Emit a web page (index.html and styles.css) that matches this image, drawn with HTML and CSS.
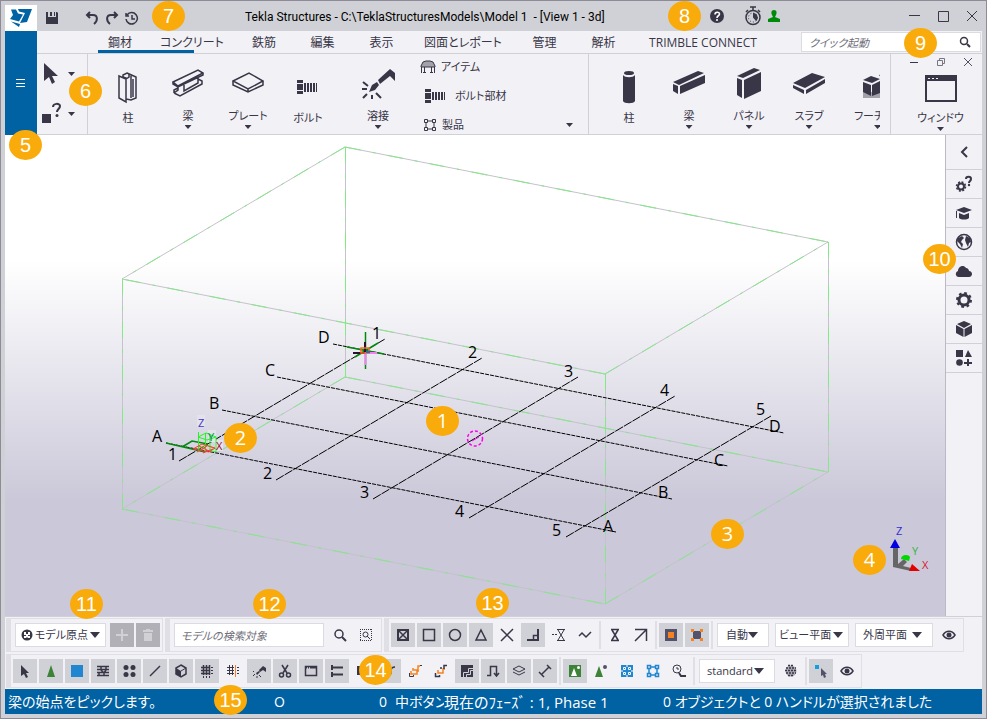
FILE: index.html
```html
<!DOCTYPE html>
<html lang="ja">
<head>
<meta charset="utf-8">
<title>Tekla Structures</title>
<link rel="stylesheet" href="styles.css">
</head>
<body>
<div class="app">
  <header class="titlebar">
    <div class="logo"><svg width="32" height="26" viewBox="0 0 32 26"><path fill="#0063a3" d="M6 4.500h5l2 4 5 1-4 7-9-2.500 3-4zM13 4h14l-5 13-7 1 5-10-6-1.500zM6 16.500l9 2.500-1 3z"/></svg></div>
    <div class="quick">
      <button class="plain" aria-label="保存"><svg width="14" height="14" viewBox="0 0 14 14"><path fill="#383647" d="M1 1h2v5h8V1h1l1 1v11H1zM5 1h2v4H5zM9 1h1v4H9z"/></svg></button>
      <button class="plain undo" aria-label="元に戻す"><svg width="14" height="14" viewBox="0 0 14 14"><path class="s2" d="M5 1L2 4l3 3M2 4h6c5 0 5 6 1 9"/></svg></button>
      <button class="plain" aria-label="やり直し"><svg width="14" height="14" viewBox="0 0 14 14"><path class="s2" d="M9 1l3 3-3 3M12 4H6C1 4 1 10 5 13"/></svg></button>
      <button class="plain" aria-label="履歴"><svg width="14" height="14" viewBox="0 0 14 14"><path class="s1 m" d="M2 4a5.700 5.700 0 1 1-1 4M1 2v3h3M7 4v4h3"/></svg></button>
    </div>
    <h1 class="title">Tekla Structures - C:\TeklaStructuresModels\Model 1&nbsp; - [View 1 - 3d]</h1>
    <div class="status-icons">
      <button class="plain" aria-label="ヘルプ"><svg width="14" height="14" viewBox="0 0 14 14"><circle cx="7" cy="7" r="7" fill="#383647"/><path d="M5 5.500c0-3 4.500-3 4.500-.5C9.500 7 7 6.500 7 9" fill="none" stroke="#fff" stroke-width="1.600"/><circle cx="7" cy="11" r="1" fill="#fff"/></svg></button>
      <button class="plain timer" aria-label="タイマー"><svg width="18" height="20" viewBox="0 0 18 20"><circle class="s1 m" cx="9" cy="11.500" r="7"/><path class="s1 m" d="M6 1h6M9 1v3M14 4l2 2M4 4L2 6"/><path d="M9 7a4.500 4.500 0 0 1 3 8l-3-3.500z" fill="#383647"/><circle cx="9" cy="11.500" r="4.500" fill="none" stroke="#383647" stroke-dasharray="1 2"/></svg></button>
      <button class="plain" aria-label="ユーザー"><svg width="12" height="12" viewBox="0 0 12 12"><path fill="#008a0c" d="M6 0c3 0 3 3 2 5l-1 2 5 2v3H0V9l5-2-1-2C3 3 3 0 6 0z"/></svg></button>
    </div>
    <div class="wincontrols">
      <button class="plain" aria-label="最小化"><svg width="12" height="12" viewBox="0 0 12 12"><path class="s1" d="M1 5.500h11"/></svg></button>
      <button class="plain" aria-label="最大化"><svg width="12" height="12" viewBox="0 0 12 12"><path class="s1" d="M1.500 1.500h10v10h-10z"/></svg></button>
      <button class="plain" aria-label="閉じる"><svg width="12" height="12" viewBox="0 0 12 12"><path class="s1" d="M1 1l10 10M11 1L1 11"/></svg></button>
    </div>
  </header>

  <div class="head">
    <button class="menu" aria-label="メニュー"><svg width="10" height="10" viewBox="0 0 10 10"><path stroke="#fff" d="M0 1.500h9M0 5.500h9M0 8.500h9"/></svg></button>
    <div class="headmain">
      <div class="tabrow">
        <nav class="tabs">
          <a href="#steel" class="active">鋼材</a><a href="#concrete">コンクリート</a><a href="#rebar">鉄筋</a><a href="#edit">編集</a><a href="#view">表示</a><a href="#drawings">図面とレポート</a><a href="#manage">管理</a><a href="#analysis">解析</a><a href="#connect">TRIMBLE CONNECT</a>
        </nav>
        <div class="launch"><input type="text" aria-label="クイック起動" placeholder="クイック起動"><svg width="12" height="12" viewBox="0 0 12 12"><circle class="s1 m" cx="5" cy="5" r="3.500"/><path class="s2" d="M8 8l3 3"/></svg></div>
      </div>
      <div class="ribbon">
        <div class="pointers">
          <button class="plain" aria-label="選択"><svg width="22" height="24" viewBox="0 0 22 24"><path fill="#383647" d="M3 1l14 13-6 0 3 6-3 2-3-7-5 4z"/></svg><i class="caret"></i></button>
          <button class="plain" aria-label="情報"><svg width="22" height="24" viewBox="0 0 22 24"><path fill="#383647" d="M1 12h9v9H1z"/><path class="s2" d="M12 5c0-4 7-4 7-1 0 3-3 3-3 6"/><circle cx="16" cy="13.500" r="1.500" fill="#383647"/></svg><i class="caret"></i></button>
        </div>
        <div class="group steel">
          <button class="tool low"><svg width="32" height="34" viewBox="0 0 32 34"><path class="s1 m" d="M7 6l7 3v23l-7-4zM15 3l9 4v21l-5 2-5-1V8l-3-1 0-2zM19 5v23M14 9l3-2V4M21 9v18"/></svg><span>柱</span></button>
          <button class="tool"><svg width="32" height="34" viewBox="0 0 32 34"><path class="s1 m" d="M1 14L26 2l5 3L6 18zM1 14v2l5 3L31 7V5M6 19v3l-4 3M2 25l6 3 22-12v-3l-4-2M12 17v6L26 15V10M2 25v-3l4-2"/></svg><span>梁</span><i class="caret"></i></button>
          <button class="tool"><svg width="32" height="34" viewBox="0 0 32 34"><path class="s1 m" d="M1 13L17 5l14 8-15 8zM1 13v4l15 7 15-7v-4M16 21v3"/></svg><span>プレート</span><i class="caret"></i></button>
          <button class="tool low"><svg width="32" height="34" viewBox="0 0 32 34"><path fill="#383647" d="M5 10h6v3H5zM5 14h6v6H5zM5 21h6v3H5zM12 13h2v9h-2zM15 13h2v9h-2zM18 13h2v9h-2zM21 13h2v9h-2zM24 13h1v9h-1z"/></svg><span>ボルト</span></button>
          <button class="tool weld"><svg width="36" height="34" viewBox="0 0 36 34"><path fill="#383647" d="M18 12L30 1l5 4v8l-5-5-10 8zM9 24l3-7 5-3 2 3-4 5z"/><path class="s2" d="M3 14l5 4M2 21h5M3 30l4-4M12 27v4M16 25l5 5"/></svg><span>溶接</span><i class="caret"></i></button>
          <div class="steellist">
            <button class="plain"><svg width="16" height="14" viewBox="0 0 16 14"><path fill="#a3a2aa" stroke="#383647" d="M1 6l2-4 3-1h4l3 1 2 4v1H1z"/><path class="s1" d="M1.500 7v6M14.500 7v6M4.500 7v5M11.500 7v5M3 12.500h3M10 12.500h3"/></svg><span>アイテム</span></button>
            <button class="plain bolt"><svg width="22" height="14" viewBox="0 0 22 14"><path fill="#383647" d="M0 0h6v3H0zM0 4h6v6H0zM0 11h6v3H0zM7 3h2v8H7zM10 3h2v8h-2zM13 3h2v8h-2zM16 3h2v8h-2zM19 3h1v8h-1z"/></svg><span>ボルト部材</span></button>
            <button class="plain assembly"><svg width="12" height="12" viewBox="0 0 12 12"><path class="s1" d="M.5.5h3v3h-3zM8.500.5h3v3h-3zM.5 8.500h3v3h-3zM8.500 8.500h3v3h-3zM4 2h4M4 10h4M2 4v4M10 4v4"/></svg><span>製品</span><i class="caret"></i></button>
          </div>
        </div>
        <div class="group concrete"><div class="clip">
          <button class="tool low"><svg width="32" height="34" viewBox="0 0 32 34"><path fill="#383647" d="M10 5c2 3 10 3 12 0v26c-1 3-11 3-12 0z"/><ellipse cx="16" cy="3" rx="5" ry="2" fill="#383647"/></svg><span>柱</span></button>
          <button class="tool"><svg width="32" height="34" viewBox="0 0 32 34"><path fill="#383647" d="M0 14L25 3l6 2L6 17zM0 16l5 2v8l-5-3zM7 18L32 7v8L7 26z"/></svg><span>梁</span><i class="caret"></i></button>
          <button class="tool"><svg width="32" height="34" viewBox="0 0 32 34"><path fill="#383647" d="M4 8L21 0l6 2-17 8zM4 10l5 2v18l-5-3zM11 12L28 4v19l-17 8z"/></svg><span>パネル</span><i class="caret"></i></button>
          <button class="tool"><svg width="32" height="34" viewBox="0 0 32 34"><path fill="#383647" d="M0 15L19 5l13 4-20 11zM0 17l11 5v4L0 20zM13 22l19-11v4L13 26z"/></svg><span>スラブ</span><i class="caret"></i></button>
          <button class="tool"><svg width="32" height="34" viewBox="0 0 32 34"><path fill="#a3a2aa" d="M10 24h20v6H10z"/><path fill="#383647" d="M10 12l8-4 9 3-8 4zM10 14l8 3v11l-8-4zM19 17l8-4v12l-8 3zM26 7l3-1v5z"/></svg><span>フーチ</span><i class="caret foot"></i></button>
        </div></div>
        <div class="group windowgroup">
          <div class="mdi">
            <button class="plain" aria-label="ビューを最小化"><svg width="10" height="8" viewBox="0 0 10 8"><path class="s1" d="M1 4.500h8"/></svg></button>
            <button class="plain" aria-label="ビューを元に戻す"><svg width="10" height="8" viewBox="0 0 10 8"><path fill="none" stroke="#777681" d="M1.500 2.500h5v5h-5zM3.500 2V.5h5v5H7"/></svg></button>
            <button class="plain" aria-label="ビューを閉じる"><svg width="10" height="8" viewBox="0 0 10 8"><path fill="none" stroke="#555361" d="M1 0l8 8M9 0L1 8"/></svg></button>
          </div>
          <button class="tool windowtool"><svg width="32" height="27" viewBox="0 0 32 27"><path fill="#383647" fill-rule="evenodd" d="M0 0h32v27H0zM2 6v19h28V6zM3 3v1h2V3zM7 3v1h2V3zM11 3v1h2V3z"/></svg><span>ウィンドウ</span><i class="caret"></i></button>
        </div>
      </div>
    </div>
  </div>

  <main class="work">
    <div class="view">
      <svg class="scene" viewBox="5 135 940 481" role="img" aria-label="View 1 - 3d">
        <path class="box" d="M345 147L828 242L605 374L122 279ZM345 377L828 472L605 604L122 509ZM345.500 147V377M828.500 242V472M605.500 374V604M122.500 279V509"/>
        <path class="boxdash" d="M345 147L828 242M605 374L828 242M605 374L122 279M345 147L122 279M345 377L828 472M605 604L828 472M122 509L605 604M345 377L122 509M345.500 147V377M828.500 242V472M605.500 374V604M122.500 279V509"/>
        <path class="gridx" d="M166 443L616 532M222 410L672 499M277 377L728 466M333 344L784 433"/>
        <path class="gridy" d="M179 461L385 339M276 480L482 358M373 499L578 377M469 518L675 396M566 537L771 416"/>
        <g class="gl">
          <text x="152" y="442">A</text><text x="209" y="409">B</text><text x="265" y="376">C</text><text x="318" y="343">D</text>
          <text x="168" y="460">1</text><text x="263" y="479">2</text><text x="360" y="498">3</text><text x="455" y="517">4</text><text x="552" y="536">5</text>
          <text x="372" y="339">1</text><text x="468" y="358">2</text><text x="564" y="377">3</text><text x="660" y="396">4</text><text x="756" y="415">5</text>
          <text x="603" y="532">A</text><text x="658" y="498">B</text><text x="714" y="466">C</text><text x="769" y="432">D</text>
        </g>
        <g fill="none">
          <circle cx="475" cy="438.500" r="7.500" stroke="#ff00f0" stroke-width="1.500" stroke-dasharray="3 2"/>
          <path stroke="#ff00f0" d="M472 441l7-4"/>
          <path stroke="#008a0c" stroke-width="1.500" d="M365.500 332v37M347 347l37 7M355 357l23-14"/>
          <path stroke="#2b1030" stroke-width="2" d="M353 353h12M365 342v10"/>
          <path stroke="#f080f0" stroke-width="2" d="M365 353h12M365.500 353v12"/>
          <path stroke="#f26a21" stroke-width="1.500" d="M361 348h8v5h-8z"/>
          <path stroke="#1b6dd1" stroke-width="2" d="M366 352h4"/>
        </g>
        <path fill="#e5e3ea" d="M197 415h8v12h-8zM208 430h8v12h-8zM215 440h8v11h-8z"/>
        <g fill="none">
          <path stroke="#008a0c" stroke-width="1.500" d="M166 443l39 9M182 447l10-6 16 3"/>
          <path stroke="#23f523" d="M198.500 432v19M198 437l8-4 10 4v15l-6-1V434M198 437l9 3 9-3M198 449l8-4 10 4M205.500 433v19"/>
          <path stroke="#ff3b30" d="M193 449l9-5 13 4-6 4zM199 446l12 6M197 452l10-6M203 453l10-4"/>
        </g>
        <g class="axis"><text x="198" y="427" fill="#4338c9">Z</text><text x="208" y="441" fill="#008a4a">Y</text><text x="216" y="450" fill="#a80038">X</text>
        <text x="896" y="535" fill="#322fd0">Z</text><text x="912" y="555" fill="#32b53b">Y</text><text x="922" y="569" fill="#d6202a">X</text></g>
        <path fill="#666" d="M893 548h5v16l6-5 3 3-4 4 8 2v3l-18-4z"/><path fill="#0000e0" d="M890 548l5-9 5 9z"/><path fill="#00d900" d="M901 559c0-5 8-5 9-2l-1 4-4-1z"/><path fill="#e40000" d="M909 571l3-7 8 7z"/>
      </svg>
    </div>
    <aside class="side">
      <button class="collapse" aria-label="サイドパネル"><svg width="16" height="16" viewBox="0 0 16 16"><path class="s2" d="M11 3L6 8l5 5"/></svg></button>
      <button aria-label="設定ヘルプ"><svg width="18" height="18" viewBox="0 0 18 18"><circle cx="6" cy="11.500" r="3" fill="none" stroke="#383647" stroke-width="2"/><circle cx="6" cy="11.500" r="4.500" fill="none" stroke="#383647" stroke-width="1.500" stroke-dasharray="2 1.530"/><path class="s2" d="M11 4c0-3 5-3 5 0 0 2-2 2-2 4"/><circle cx="14" cy="10" r="1.200" fill="#383647"/></svg></button>
      <button aria-label="学習"><svg width="18" height="16" viewBox="0 0 18 16"><path fill="#383647" d="M1 5l8-3 8 3-8 3zM4 8l5 2 5-2v5c-2 2-8 2-10 0zM1 6h1v7H1z"/></svg></button>
      <button aria-label="オンライン"><svg width="18" height="18" viewBox="0 0 18 18"><circle class="s1 m" cx="9" cy="9" r="7.500"/><path fill="#383647" d="M3 5l4-2 2 2-2 2-1 2 2 2-1 4-2-4-3-3zM11 3l4 2 1 4-2 1-1 4-2-4-1-3z"/></svg></button>
      <button aria-label="クラウド"><svg width="18" height="16" viewBox="0 0 18 16"><path fill="#383647" d="M4 14c-4 0-4-5-1-6 0-4 5-7 8-3 2 0 3 2 3 3 4 0 4 6 0 6z"/></svg></button>
      <button aria-label="設定"><svg width="18" height="18" viewBox="0 0 18 18"><circle cx="9" cy="9" r="5" fill="none" stroke="#383647" stroke-width="3"/><circle cx="9" cy="9" r="7" fill="none" stroke="#383647" stroke-width="2" stroke-dasharray="2.750 2.750"/></svg></button>
      <button aria-label="モデル"><svg width="18" height="18" viewBox="0 0 18 18"><path fill="#383647" d="M9 1l7 3-7 4-7-4zM1 5l7.500 4v8L1 13zM17 5L9.500 9v8l7.500-4z"/></svg></button>
      <button aria-label="コンポーネント"><svg width="18" height="18" viewBox="0 0 18 18"><path fill="#383647" d="M1 1h7v7H1zM13 1l4 7h-7zM12 10h2v3h3v2h-3v2h-2v-2h-3v-2h3z"/><circle cx="4.500" cy="13.500" r="3.300" fill="#383647"/></svg></button>
    </aside>
  </main>

  <footer class="bottom">
    <div class="bars">
      <div class="bar">
        <div class="drop origin"><svg width="12" height="12" viewBox="0 0 12 12"><circle cx="6" cy="6" r="5.500" fill="#383647"/><path fill="#fff" d="M3 3h2v2h2V3h2v3H7v1h2v2H7L6 8 5 9H3V7h2V6H3z"/></svg><select aria-label="原点"><option>モデル原点</option></select></div>
        <button class="dis" aria-label="追加"><svg width="14" height="14" viewBox="0 0 14 14"><path stroke="#d0d0d5" stroke-width="2" d="M7 1v12M1 7h12"/></svg></button>
        <button class="dis" aria-label="削除"><svg width="14" height="14" viewBox="0 0 14 14"><path fill="#d0d0d5" d="M5 1h4v1h3v2H2V2h3zM3 5h8v8H3z"/></svg></button>
      </div>
      <div class="bar findbar">
        <input class="find" type="text" aria-label="モデルの検索対象" placeholder="モデルの検索対象">
        <button class="t" aria-label="検索"><svg width="14" height="14" viewBox="0 0 14 14"><circle class="s1 m" cx="6" cy="6" r="4"/><path class="s2" d="M9 9l4 4"/></svg></button>
        <button class="t" aria-label="選択内検索"><svg width="14" height="14" viewBox="0 0 14 14"><path class="s1" d="M1.500 1v12M12.500 1v12M1 1.500h12M1 12.500h12" stroke-dasharray="1 1"/><circle class="s1" cx="6.500" cy="6.500" r="2.500"/><path class="s1" d="M8 8l3 3"/></svg></button>
      </div>
      <div class="bar snap">
        <button class="t on" aria-label="スナップ 交点"><svg width="14" height="14" viewBox="0 0 14 14"><path class="s2" d="M2 2h10v10H2z"/><path class="s1 m" d="M3 3l8 8M11 3l-8 8"/></svg></button>
        <button class="t on" aria-label="スナップ 端点"><svg width="14" height="14" viewBox="0 0 14 14"><path class="s1 m" d="M1.500 1.500h11v11h-11z"/></svg></button>
        <button class="t on" aria-label="スナップ 中心"><svg width="14" height="14" viewBox="0 0 14 14"><circle class="s1 m" cx="7" cy="7" r="5.500"/></svg></button>
        <button class="t on" aria-label="スナップ 中点"><svg width="14" height="14" viewBox="0 0 14 14"><path class="s1 m" d="M7 2l5 10H2z"/></svg></button>
        <button class="t" aria-label="スナップ 交差"><svg width="14" height="14" viewBox="0 0 14 14"><path class="s1 m" d="M1 1l12 12M13 1L1 13"/></svg></button>
        <button class="t on" aria-label="スナップ 垂直"><svg width="14" height="14" viewBox="0 0 14 14"><path class="s2" d="M1 12h12M12 1v11"/><path class="s1 m" d="M7.500 12V7.500H12"/></svg></button>
        <button class="t" aria-label="スナップ 延長"><svg width="14" height="14" viewBox="0 0 14 14"><path class="s1" d="M5 1.500h8M5 12.500h8M6 2l6 10M12 2l-6 10"/><path class="s1" d="M0 6.500h6" stroke-dasharray="2 1"/></svg></button>
        <button class="t" aria-label="スナップ 任意"><svg width="14" height="14" viewBox="0 0 14 14"><path class="s1 m" d="M1 8l3-3 4 4 5-5"/></svg></button>
        <i class="sep"></i>
        <button class="t" aria-label="スナップ 近接"><svg width="14" height="14" viewBox="0 0 14 14"><path class="s1 m" d="M3 1.500h8M3 12.500h8M4 2l6 10M10 2L4 12"/></svg></button>
        <button class="t" aria-label="スナップ 線"><svg width="14" height="14" viewBox="0 0 14 14"><path class="s1 m" d="M1 1.500h11.500V13M12 2L1 13"/></svg></button>
        <i class="sep"></i>
        <button class="t on" aria-label="参照点"><svg width="14" height="14" viewBox="0 0 14 14"><path fill="#54526a" d="M1 1h12v12H1z"/><path fill="#f58220" d="M4 4h6v6H4z"/></svg></button>
        <button class="t on" aria-label="ジオメトリ点"><svg width="14" height="14" viewBox="0 0 14 14"><path fill="#54526a" d="M3 3h8v8H3z"/><path fill="#f58220" d="M1 1h3v3H1zM10 1h3v3h-3zM1 10h3v3H1zM10 10h3v3h-3z"/></svg></button>
        <i class="sep"></i>
        <div class="drop auto"><select aria-label="自動"><option>自動</option></select></div>
        <div class="drop vplane"><select aria-label="平面"><option>ビュー平面</option></select></div>
        <div class="drop oplane"><select aria-label="外周"><option>外周平面</option></select></div>
        <button class="t" aria-label="表示"><svg width="14" height="14" viewBox="0 0 14 14"><path class="s1 m" d="M1 7c3-5 9-5 12 0-3 5-9 5-12 0z"/><circle cx="7" cy="7" r="2.500" fill="#383647"/></svg></button>
      </div>
    </div>
    <div class="bars">
      <div class="bar selbar">
        <button class="t on" aria-label="すべて選択"><svg width="14" height="14" viewBox="0 0 14 14"><path fill="#383647" d="M3 1l8 8H8l2 4-2 1-2-4-3 2z"/></svg></button>
        <button class="t on" aria-label="コンポーネント選択"><svg width="14" height="14" viewBox="0 0 14 14"><path fill="#3d8237" d="M7 1l4 12H3z"/></svg></button>
        <button class="t on" aria-label="部材選択"><svg width="14" height="14" viewBox="0 0 14 14"><path fill="#1f86cf" d="M1 1h12v12H1z"/></svg></button>
        <button class="t on" aria-label="サーフェス選択"><svg width="14" height="14" viewBox="0 0 14 14"><path class="s1 m" d="M1 2.500h12M1 5.500h12M1 8.500h12M1 11.500h12M5 2v3M10 2v3M3 9v3M8 9v3M5 6l3 3M10 6L8 9"/></svg></button>
        <button class="t on" aria-label="点選択"><svg width="14" height="14" viewBox="0 0 14 14"><g fill="#383647"><circle cx="4" cy="3.500" r="2.500"/><circle cx="11" cy="3.500" r="2.500"/><circle cx="4" cy="10.500" r="2.500"/><circle cx="11" cy="10.500" r="2.500"/></g></svg></button>
        <button class="t on" aria-label="線選択"><svg width="14" height="14" viewBox="0 0 14 14"><path class="s1 m" d="M2 12L12 2"/></svg></button>
        <button class="t on" aria-label="参照モデル選択"><svg width="14" height="14" viewBox="0 0 14 14"><path class="s1 m" d="M7 1l5 3v6l-5 3-5-3V4z"/><path fill="#383647" d="M2 4l5 3v6l-5-3z"/><path class="s1" d="M7 7l5-3"/></svg></button>
        <button class="t on" aria-label="グリッド選択"><svg width="14" height="14" viewBox="0 0 14 14"><path class="s1 m" d="M1 3.500h9M1 6.500h9M1 9.500h9M3.500 1v10M6.500 1v10M9.500 1v10"/><path class="s1" d="M11 3.500h2M11 6.500h2M11 9.500h2M3.500 12v2M6.500 12v2M9.500 12v2"/></svg></button>
        <button class="t" aria-label="グリッド線選択"><svg width="14" height="14" viewBox="0 0 14 14"><path class="s1" d="M1 3.500h7M1 6.500h7M1 9.500h7M3.500 1v10M6.500 1v10"/><path stroke="#f58220" d="M9.500 1v12"/><path class="s1" d="M11 3.500h2M11 6.500h2M11 9.500h2"/></svg></button>
        <button class="t on" aria-label="溶接選択"><svg width="14" height="14" viewBox="0 0 14 14"><path fill="#383647" d="M7 6l4-4 3 2v4l-3-2-3 2zM4 9l3-2 1 1-3 3z"/><path class="s1" d="M1 7l1 1M1 12l2-2M7 11l2 2M5 12v2"/></svg></button>
        <button class="t on" aria-label="カット選択"><svg width="14" height="14" viewBox="0 0 14 14"><circle class="s1 m" cx="3.500" cy="11" r="2"/><circle class="s1 m" cx="10.500" cy="11" r="2"/><path class="s1 m" d="M4 1l5 8M10 1L5 9"/></svg></button>
        <button class="t on" aria-label="ビュー選択"><svg width="14" height="14" viewBox="0 0 14 14"><path class="s1 m" d="M1.500 2.500h11v9h-11z"/><path class="s2" stroke-dasharray="1 1" d="M2 3.500h4"/><path class="s2" d="M6 3.500h7"/></svg></button>
        <button class="t on" aria-label="ボルト選択"><svg width="14" height="14" viewBox="0 0 14 14"><path class="s2" d="M2 1v5M2 8v5M3 3.500h10M3 10.500h10"/></svg></button>
        <button class="t" aria-label="単独ボルト選択"><svg width="14" height="14" viewBox="0 0 14 14"><path fill="#383647" d="M1 2h6v9H1z"/></svg></button>
        <button class="t on" aria-label="鉄筋選択"><svg width="14" height="14" viewBox="0 0 14 14"><path class="s1 m" d="M3 12c6 0 6-2 6-5s2-4 4-4"/></svg></button>
        <button class="t" aria-label="鉄筋グループ選択"><svg width="14" height="14" viewBox="0 0 14 14"><path fill="none" stroke="#f58220" stroke-width="1.500" d="M5 4v2h5V2h2M3 7v3h6V7h2"/><path class="s1" d="M1.500 9v3.500h4V11M12 1.500h2"/></svg></button>
        <button class="t" aria-label="単独鉄筋選択"><svg width="14" height="14" viewBox="0 0 14 14"><path fill="none" stroke="#f58220" stroke-width="1.500" d="M4 6v3h5V5h2"/><path class="s1 m" d="M1.500 9v3.500h4V11M7 3v2M10 5V1.500h3"/></svg></button>
        <button class="t on" aria-label="打設選択"><svg width="14" height="14" viewBox="0 0 14 14"><path fill="#383647" d="M1 1h12v12H1z"/><path fill="none" stroke="#d0d1d6" d="M3.500 13V8.500h5V4.500H13M6.500 13v-2.500h4V6.500H13"/></svg></button>
        <button class="t on" aria-label="打設中断選択"><svg width="14" height="14" viewBox="0 0 14 14"><path class="s1 m" d="M1 11.500h3.500v-9h6V12M8 9l2.500 3L13 9"/></svg></button>
        <button class="t on" aria-label="平面選択"><svg width="14" height="14" viewBox="0 0 14 14"><path class="s1" d="M1 5l6-3 6 3-6 3zM1 8l6 3 6-3"/></svg></button>
        <button class="t on" aria-label="距離選択"><svg width="14" height="14" viewBox="0 0 14 14"><path class="s1 m" d="M3 11l8-8M1 8l5 5M9 1l4 4"/></svg></button>
        <i class="sep"></i>
        <button class="t on" aria-label="コンポーネント優先"><svg width="14" height="14" viewBox="0 0 14 14"><path fill="#3d8237" d="M1 1h12v12H1z"/><path fill="#fff" d="M6 4l3 8H3z"/><circle cx="10.500" cy="3.500" r="1.500" fill="#fff"/></svg></button>
        <button class="t" aria-label="コンポーネント内"><svg width="14" height="14" viewBox="0 0 14 14"><path fill="#3d8237" d="M5 2l4 11H1z"/><circle cx="11" cy="3" r="2" fill="#54526a"/></svg></button>
        <button class="t" aria-label="製品優先"><svg width="14" height="14" viewBox="0 0 14 14"><path fill="#1f86cf" d="M1 1h12v12H1z"/><path fill="none" stroke="#fff" d="M3.500 3.500h2v2h-2zM8.500 3.500h2v2h-2zM3.500 8.500h2v2h-2zM8.500 8.500h2v2h-2zM7 1v2M7 11v2M1 7h2M11 7h2"/></svg></button>
        <button class="t" aria-label="製品内"><svg width="14" height="14" viewBox="0 0 14 14"><path fill="none" stroke="#1f86cf" stroke-width="1.500" d="M1.500 1.500h3v3h-3zM9.500 1.500h3v3h-3zM1.500 9.500h3v3h-3zM9.500 9.500h3v3h-3zM5 3h4M5 11h4M3 5v4M11 5v4"/></svg></button>
        <button class="t" aria-label="タスク"><svg width="14" height="14" viewBox="0 0 14 14"><circle class="s1" cx="5" cy="5" r="4"/><path class="s1" d="M5 3v2h2"/><path class="s2" d="M7 9l2 3h5"/></svg></button>
        <i class="sep"></i>
        <div class="drop std"><select aria-label="フィルター"><option>standard</option></select></div>
        <button class="t" aria-label="フィルター設定"><svg width="14" height="14" viewBox="0 0 14 14"><circle cx="7" cy="7" r="5.500" fill="#a9a8b0"/><path class="s1 m" stroke-dasharray="2 1" d="M4 1.500h6M2 4h10M1 6.500h12M2 9h10M4 11.500h6"/></svg></button>
        <i class="sep"></i>
        <button class="t on" aria-label="スマート選択"><svg width="14" height="14" viewBox="0 0 14 14"><path fill="#12a0dd" d="M1 1h4v4H1z"/><path fill="#54526a" d="M7 4l6 6h-2l1 3-2 1-1-3-2 1z"/></svg></button>
        <button class="t" aria-label="選択の表示"><svg width="14" height="14" viewBox="0 0 14 14"><path class="s1 m" d="M1 7c3-5 9-5 12 0-3 5-9 5-12 0z"/><circle cx="7" cy="7" r="2.500" fill="#383647"/></svg></button>
      </div>
    </div>
    <div class="statusbar">
      <span class="prompt">梁の始点をピックします。</span><span class="flag">O</span><span class="num">0</span><span class="mid">中ボタン</span><span class="phase">現在のﾌｪｰｽﾞ : 1, Phase 1</span><span class="count">0 オブジェクトと 0 ハンドルが選択されました</span>
    </div>
  </footer>

  <span class="badge seg b1">1</span><span class="badge seg b2">2</span><span class="badge seg b3">3</span><span class="badge seg b4">4</span><span class="badge b5">5</span><span class="badge b6">6</span><span class="badge b7">7</span><span class="badge b8">8</span><span class="badge b9">9</span><span class="badge b10">10</span><span class="badge b11">11</span><span class="badge b12">12</span><span class="badge b13">13</span><span class="badge b14">14</span><span class="badge b15">15</span>
</div>
</body>
</html>
```
FILE: styles.css
```css
* { box-sizing: border-box; }
body { margin: 0; }
body, button, input, select {
  font-family: "Open Sans", "Noto Sans CJK JP", sans-serif;
  font-size: 12px;
  font-feature-settings: "palt";
  color: #383647;
}
svg { display: block; flex: none; }
button { border: 0; padding: 0; margin: 0; background: none; display: flex; align-items: center; justify-content: center; line-height: 16px; }
.s1 { fill: none; stroke: #383647; }
.s2 { fill: none; stroke: #383647; stroke-width: 2; }
.m { stroke-width: 1.5; }

.app {
  position: relative;
  display: flex;
  flex-direction: column;
  height: 100vh;
  overflow: hidden;
  background: #d0d1d6;
  border: 1px solid #8d8b97;
  padding: 0 4px 4px;
}

.titlebar { display: flex; align-items: center; height: 30px; flex: none; }
.logo { width: 32px; height: 26px; background: #fff; align-self: flex-end; }
.quick { display: flex; gap: 6px; margin-left: 8px; width: 200px; padding-top: 3px; }
.undo { margin-left: 20px; }
.title { margin: 0; font-family: Roboto, "Open Sans", sans-serif; font-size: 12px; font-weight: 400; color: #000; white-space: nowrap; line-height: 16px; padding-top: 2px; }
.status-icons { display: flex; align-items: center; gap: 14px; margin-left: auto; margin-right: 128px; }
.timer { margin-left: 6px; }
.status-icons button:last-child { margin-left: -8px; }
.wincontrols { display: flex; gap: 17px; padding-right: 4px; }

.head { display: flex; height: 104px; flex: none; background: #f2f1f6; }
.menu { width: 32px; background: #0061a3; flex: none; }
.headmain { flex: 1; min-width: 0; display: flex; flex-direction: column; }
.tabrow { display: flex; height: 22px; justify-content: space-between; padding-left: 54px; }
.tabs { display: grid; grid-template-columns: 58px 86px 58px 59px 59px 104px 59px 59px 140px; }
.tabs a { color: #383647; text-decoration: none; text-align: center; line-height: 24px; height: 22px; white-space: nowrap; position: relative; }
.tabs .active::after { content: ""; position: absolute; left: 7px; bottom: 0; width: 96px; height: 3px; background: #0061a3; }
.launch { display: flex; align-items: center; width: 180px; margin: 1px 1px 1px 0; background: #fff; border: 1px solid #dcdbe1; padding-right: 9px; }
.launch input { flex: 1; min-width: 0; border: 0; padding: 0 0 0 7px; outline: 0; background: none; }
input::placeholder { color: #6f6e79; opacity: 1; font-style: italic; font-size: 11px; }

.ribbon { display: flex; flex: 1; border-top: 1px solid #d0d1d6; border-bottom: 1px solid #d0d1d6; }
.pointers { width: 50px; padding: 8px 0 8px 4px; display: flex; flex-direction: column; justify-content: space-between; }
.pointers button { gap: 5px; justify-content: flex-start; }
.caret { display: block; width: 7px; height: 4px; background: #383647; clip-path: polygon(0 0, 100% 0, 50% 100%); flex: none; }
.group { display: flex; border-left: 1px solid #d0d1d6; }
.steel { width: 501px; padding-left: 10px; }
.tool { width: 60px; flex: none; flex-direction: column; justify-content: flex-start; padding-top: 14px; font-size: 11px; }
.tool span { line-height: 16px; margin-top: 6px; white-space: nowrap; }
.tool .caret { margin-top: 1px; }
.tool.low { padding-top: 16px; }
.tool svg { height: 34px; }
.weld { margin: 0 10px; }
.steellist { flex: 1; display: flex; flex-direction: column; justify-content: space-between; padding: 5px 15px 1px 2px; }
.steellist button { justify-content: flex-start; gap: 5px; font-size: 11px; }
.steellist .bolt { padding-left: 5px; gap: 8px; }
.steellist .assembly { padding-left: 4px; gap: 6px; }
.steellist .assembly .caret { margin-left: auto; }
.concrete { width: 302px; padding: 0 10px; }
.clip { display: flex; overflow: hidden; }
.tool .foot { align-self: flex-end; margin-right: 18px; }
.windowgroup { flex: 1; flex-direction: column; }
.mdi { display: flex; justify-content: flex-end; gap: 17px; padding: 4px 9px 0 0; }
.windowtool { width: 100%; padding: 9px 0 0 8px; }
.windowtool svg { height: 27px; }
.windowtool span { margin-top: 8px; }

.work { display: flex; flex: 1; min-height: 0; background: #f2f1f6; }
.view { flex: 1; min-width: 0; background: linear-gradient(#fff 0%, #fff 26%, #cbc8d9 76%, #cbc8d9 100%); }
.scene { width: 100%; height: 100%; }
.box { fill: none; stroke: #c4c2ca; }
.boxdash { fill: none; stroke: #84e888; stroke-dasharray: 16 12 3 12; }
.gridx { fill: none; stroke: #000; stroke-dasharray: 4 1; }
.gridy { fill: none; stroke: #000; stroke-dasharray: 9 1; }
.gl { font-size: 16px; fill: #000; }
.axis { font-size: 11px; }
.side { width: 37px; border-left: 1px solid #bbb9c4; }
.side button { width: 100%; height: 29px; border-bottom: 1px solid #d0d1d6; }
.side .collapse { height: 35px; }

.bottom { background: #f2f1f6; border-top: 1px solid #d0d1d6; flex: none; }
.bars { display: flex; gap: 2px; padding: 1px 1px 0; height: 36px; }
.bar { display: flex; align-items: center; gap: 2px; height: 34px; border: 1px solid #e0dfe5; border-left: 5px solid #e0dfe5; padding: 0 2px; }
.t, .dis { width: 24px; height: 24px; flex: none; }
.on { background: #d0d1d6; }
.dis { background: #b0b0b6; }
.sep { width: 2px; height: 28px; background: #e0dfe5; flex: none; }
.drop { display: flex; align-items: center; height: 24px; background: #fff; border: 1px solid #dcdbe1; position: relative; flex: none; }
.drop select { appearance: none; border: 0; background: none; padding: 0; width: 100%; min-width: 0; outline: 0; font-size: 11px; line-height: 20px; }
.drop::after { content: ""; position: absolute; right: 5px; top: 8px; width: 10px; height: 6px; background: #383647; clip-path: polygon(0 0, 100% 0, 50% 100%); pointer-events: none; }
.origin { width: 91px; padding-left: 5px; gap: 2px; margin: 0 2px; }
.find { width: 150px; height: 24px; border: 1px solid #dcdbe1; padding: 0 6px; background: #fff; margin: 0 2px; }
.findbar { padding-right: 3px; }
.auto { width: 52px; margin-left: 2px; padding-left: 8px; }
.vplane { width: 74px; margin-left: 4px; padding-left: 3px; }
.oplane { width: 78px; margin: 0 2px 0 4px; padding-left: 7px; }
.auto::after, .oplane::after, .std::after { right: 10px; }
.std { width: 76px; padding-left: 7px; margin: 0 2px; }
.statusbar { display: flex; align-items: center; height: 25px; background: #0061a3; color: #fff; font-size: 14px; line-height: 24px; white-space: nowrap; padding: 0 3px; }
.prompt { width: 266px; }
.flag { width: 105px; }
.num { width: 16px; }
.mid { width: 49px; overflow: hidden; }
.phase { flex: 1; font-size: 15px; }
.count { width: 316px; }

.badge { position: absolute; width: 33px; height: 30px; border-radius: 50%; background: #f9ab0c; color: #fff; font: 20px/30px "Liberation Sans", sans-serif; text-align: center; }
.seg { font-family: "Open Sans", sans-serif; }
.b1 { left: 425px; top: 405px; }
.b2 { left: 223px; top: 422px; }
.b3 { left: 710px; top: 518px; }
.b4 { left: 852px; top: 544px; }
.b5 { left: 8px; top: 129px; }
.b6 { left: 68px; top: 75px; }
.b7 { left: 151px; top: 0; }
.b8 { left: 667px; top: 0; }
.b9 { left: 903px; top: 27px; }
.b10 { left: 922px; top: 243px; }
.b11 { left: 69px; top: 588px; }
.b12 { left: 252px; top: 588px; }
.b13 { left: 475px; top: 587px; }
.b14 { left: 358px; top: 654px; }
.b15 { left: 213px; top: 684px; }
```
